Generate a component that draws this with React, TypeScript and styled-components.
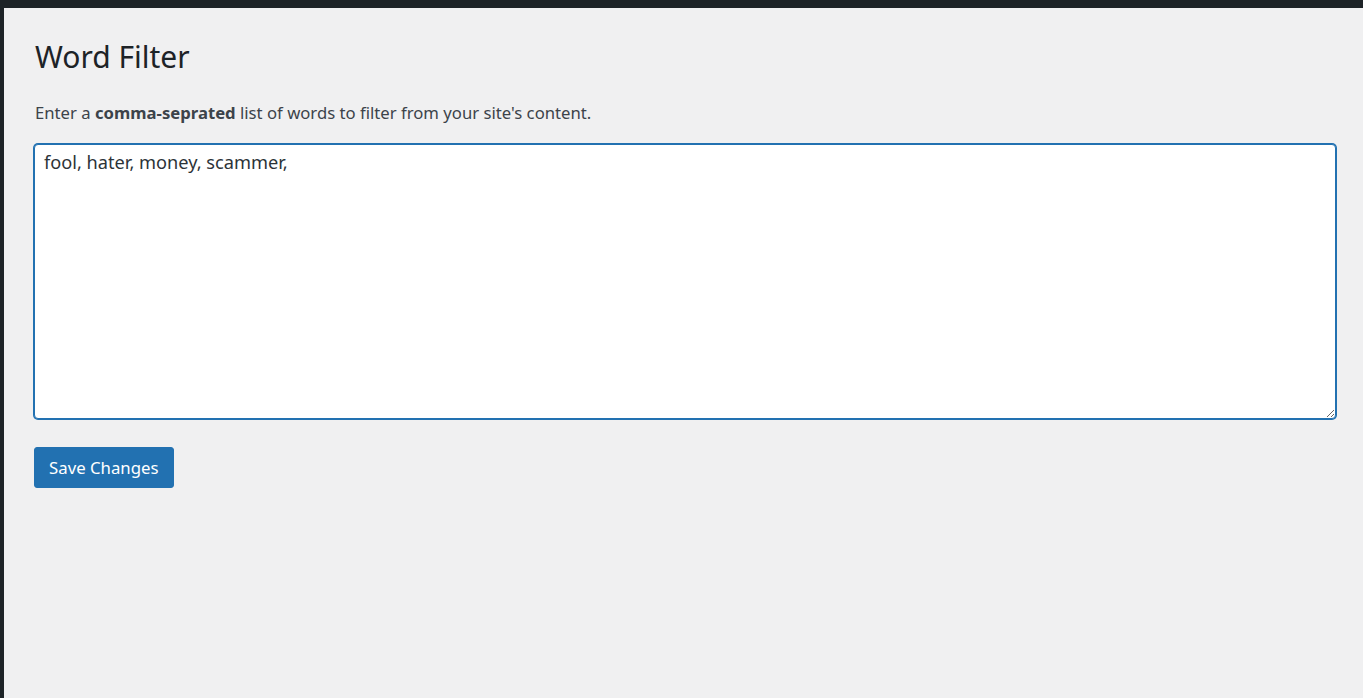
import React from "react";
import styled, { createGlobalStyle } from "styled-components";

const GlobalStyle = createGlobalStyle`
  html, body { margin: 0; padding: 0; background: #f0f0f1; }
  body { font-family: "Noto Sans", "Open Sans", sans-serif; color: #3c434a; }
  * { box-sizing: border-box; }
`;

const Page = styled.div`
  min-height: 698px;
  display: flex;
  flex-direction: column;
  background: #f0f0f1;
`;

const TopBar = styled.div`
  height: 8px;
  background: #1d2327;
`;

const Body = styled.div`
  flex: 1;
  display: flex;
`;

const SideStrip = styled.div`
  width: 4px;
  background: #1d2327;
`;

const Main = styled.main`
  flex: 1;
  padding: 30px 27px 0 30px;
`;

const Title = styled.h1`
  margin: 0 0 0 1px;
  font-size: 30px;
  font-weight: 400;
  line-height: 38px;
  color: #1d2327;
`;

const Description = styled.p`
  margin: 24px 0 0 1px;
  font-size: 16.7px;
  line-height: 25px;
  color: #3c434a;
  strong { font-weight: 700; }
`;

const WordsField = styled.textarea`
  display: block;
  width: 100%;
  height: 275px;
  margin-top: 19px;
  padding: 4px 9px;
  font-family: "Noto Sans", "Open Sans", sans-serif;
  font-size: 18.2px;
  line-height: 26px;
  color: #2c3338;
  background: #fff;
  border: 1px solid #2271b1;
  border-radius: 4px;
  box-shadow: 0 0 0 1px #2271b1;
  outline: none;
  resize: both;
`;

const SaveButton = styled.button`
  margin-top: 28px;
  height: 41px;
  padding: 0 14px;
  font-family: "Noto Sans", "Open Sans", sans-serif;
  font-size: 16.8px;
  color: #fff;
  background: #2271b1;
  border: 1px solid #2271b1;
  border-radius: 3px;
  cursor: pointer;
`;

export default function App() {
  return (
    <>
      <GlobalStyle />
      <Page>
        <TopBar />
        <Body>
          <SideStrip />
          <Main>
            <Title>Word Filter</Title>
            <Description>
              Enter a <strong>comma-seprated</strong> list of words to filter from your site's content.
            </Description>
            <WordsField defaultValue="fool, hater, money, scammer," />
            <SaveButton>Save Changes</SaveButton>
          </Main>
        </Body>
      </Page>
    </>
  );
}
